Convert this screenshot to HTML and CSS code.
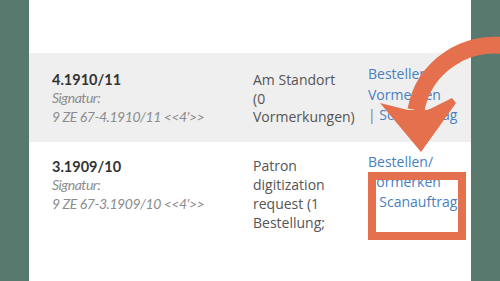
FILE: index.html
```html
<!DOCTYPE html>
<html>
<head>
<meta charset="utf-8">
<link rel="stylesheet" href="styles.css">
</head>
<body>
<div class="page">
  <div class="side"></div>
  <div class="main">
    <div class="top"></div>
    <div class="row row-grey">
      <div class="c1">
        <div class="title">4.1910/11</div>
        <div class="meta">Signatur:</div>
        <div class="meta">9 ZE 67-4.1910/11 &lt;&lt;4'&gt;&gt;</div>
      </div>
      <div class="c2">Am Standort<br>(0<br>Vormerkungen)</div>
      <div class="c3"><a>Bestellen/</a><br><a>Vormerken</a><br><span class="bar">|</span> <a>Scanauftrag</a></div>
    </div>
    <div class="row row-white">
      <div class="c1">
        <div class="title">3.1909/10</div>
        <div class="meta">Signatur:</div>
        <div class="meta">9 ZE 67-3.1909/10 &lt;&lt;4'&gt;&gt;</div>
      </div>
      <div class="c2">Patron<br>digitization<br>request (1<br>Bestellung;</div>
      <div class="c3"><a>Bestellen/</a><br><a>Vormerken</a><br><span class="bar">|</span> <a>Scanauftrag</a></div>
    </div>
  </div>
  <div class="side"></div>

  <div class="highlight"></div>
  <svg class="arrow" width="500" height="281" viewBox="0 0 500 281">
    <path d="M 506 46 C 466 40, 424 66, 416 110" fill="none" stroke="#e4704d" stroke-width="17"/>
    <polygon points="380,103 408,110 428,110 452,98 456,103 421,152" fill="#e4704d"/>
  </svg>
</div>
</body>
</html>
```
FILE: styles.css
```css
* { box-sizing: border-box; }
html, body { margin: 0; padding: 0; }
body { width: 500px; height: 281px; overflow: hidden; background: #fff; }

.page {
  position: relative;
  display: flex;
  width: 500px;
  height: 281px;
}
.side { width: 29px; background: #587a6e; flex: none; }
.page > .side:last-of-type { width: 30px; }
.main { flex: 1; background: #fff; display: flex; flex-direction: column; }
.top { height: 53px; }

.row {
  display: grid;
  grid-template-columns: 201px 115px 1fr;
  padding-left: 23px;
}
.row-grey { background: #efefef; height: 89px; }
.row-white { background: #fff; height: 92px; overflow: hidden; }

.c1 { font-family: "Lato", "Open Sans", sans-serif; }
.title { font-weight: 700; font-size: 14.5px; color: #333; line-height: 18px; }
.meta { font-style: italic; font-size: 14px; color: #8c8c8c; line-height: 18.5px; letter-spacing: -0.45px; }

.c2 { font-family: "Open Sans", sans-serif; font-size: 14px; color: #555; line-height: 18.5px; }
.c3 { font-family: "Open Sans", sans-serif; font-size: 14px; color: #4a80bf; line-height: 20.5px; }
.c3 a { color: #4a80bf; text-decoration: none; }
.bar { color: #777; }

.row-grey .c1 { padding-top: 18px; }
.row-grey .c2 { padding-top: 18px; }
.row-grey .c3 { padding-top: 11px; }
.row-white .c1 { padding-top: 16px; }
.row-white .c2 { padding-top: 14px; line-height: 19px; }
.row-white .c3 { padding-top: 10px; line-height: 20px; }

.highlight {
  position: absolute;
  left: 368px;
  top: 172px;
  width: 98px;
  height: 68px;
  border: 8px solid #e4704d;
}
.arrow { position: absolute; left: 0; top: 0; }
```
